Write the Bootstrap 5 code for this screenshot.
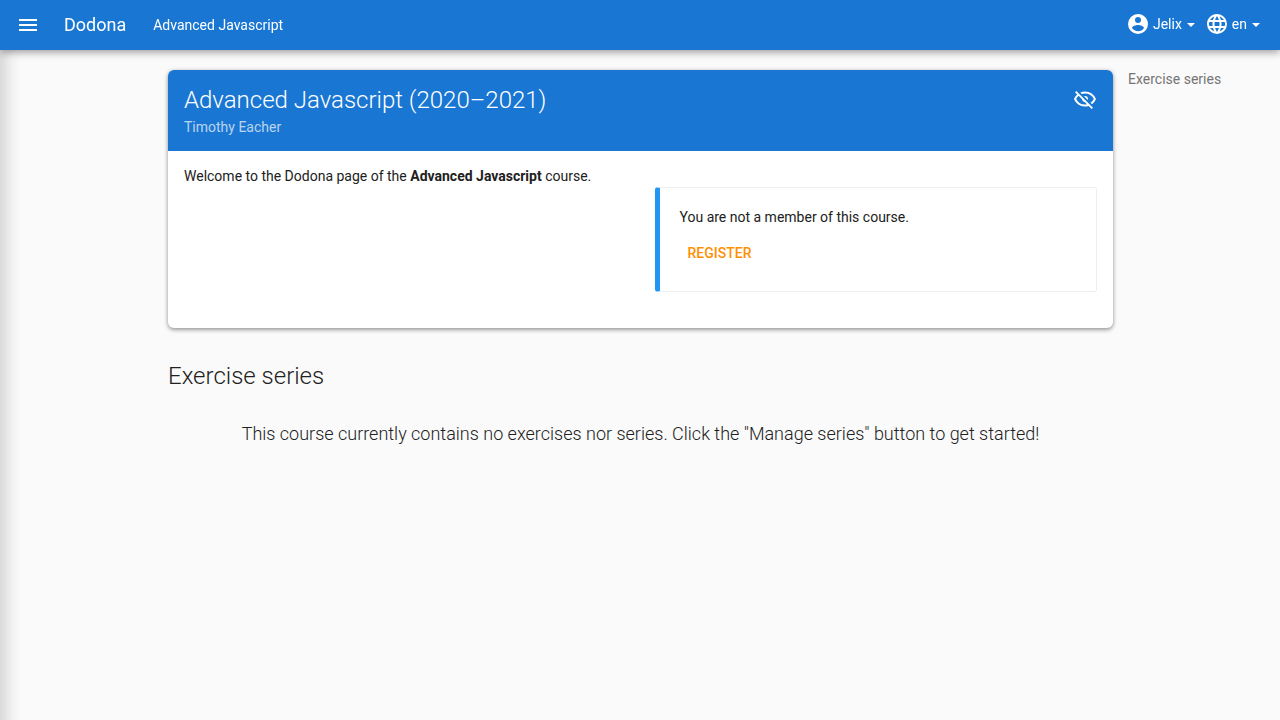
<!DOCTYPE html>
<html lang="en">
<head>
<meta charset="utf-8">
<meta name="viewport" content="width=device-width, initial-scale=1">
<title>Advanced Javascript - Dodona</title>
<link rel="stylesheet" href="https://cdn.jsdelivr.net/npm/bootstrap@5.3.0/dist/css/bootstrap.min.css">
<style>
  body {
    font-family: Roboto, "Liberation Sans", sans-serif;
    font-size: 14px;
    line-height: 20px;
    color: #212121;
    background: #fafafa;
  }
  svg { fill: currentColor; display: block; }
  .topbar {
    height: 50px;
    background: #1976d2;
    box-shadow: 0 2px 8px rgba(0, 0, 0, .4);
    z-index: 20;
  }
  .topbar a, .topbar button { color: #fff; }
  .topbar .brand { font-size: 18px; }
  .topbar .course-link { margin-left: 27px; }
  .account-links { gap: 10px; padding-bottom: 2px; }
  .account-links a { gap: 3px; }
  .topbar .menu-link::after { margin-left: 5px; border-top-width: 4px; border-left-width: 4px; border-right-width: 4px; vertical-align: 2px; }
  .drawer-edge {
    top: 40px;
    bottom: -20px;
    left: -10px;
    width: 10px;
    box-shadow: 0 0 20px rgba(0, 0, 0, .36);
  }
  .page {
    display: grid;
    grid-template-columns: minmax(0, 1fr) minmax(0, 945px) minmax(0, 1fr);
    column-gap: 15px;
    padding-top: 20px;
    padding-left: 1px;
  }
  .course-card {
    border-radius: 6px;
    box-shadow: 0 2px 4px rgba(0, 0, 0, .35), 0 0 4px rgba(0, 0, 0, .12);
  }
  .course-head { background: #1976d2; height: 81px; padding: 14px 16px; }
  .course-body { padding: 15px 16px 36px; }
  .course-body .row { --bs-gutter-x: 28px; }
  .headline { font-size: 24px; line-height: 32px; font-weight: 300; }
  .teacher { color: rgba(255, 255, 255, .7); line-height: 22px; }
  .visibility-icon { margin-top: 3px; }
  .notice {
    margin-top: 21px;
    padding: 19px 20px 20px;
    border: 1px solid #eee;
    border-left: 5px solid #2196f3;
    border-radius: 3px;
  }
  .register {
    height: 36px;
    padding: 0 8px;
    margin: 8px 0 0;
    font-size: 14px;
    font-weight: 500;
    color: #ff8f00;
  }
  .register:hover { color: #ef6c00; }
  .series-title { margin-top: 32px; }
  .empty-text { font-size: 18px; line-height: 26px; font-weight: 300; margin-top: 29px; }
  .toc { color: #757575; line-height: 18px; }
</style>
</head>
<body>
<nav class="topbar sticky-top d-flex align-items-center px-3" aria-label="Main">
  <button type="button" class="btn p-0 border-0" aria-label="Open menu">
    <svg width="24" height="24" viewBox="0 0 24 24"><path d="M3 6h18v2H3V6m0 5h18v2H3v-2m0 5h18v2H3v-2z"/></svg>
  </button>
  <a href="#" class="brand text-decoration-none ms-4">Dodona</a>
  <a href="#" class="course-link text-decoration-none">Advanced Javascript</a>
  <div class="account-links d-flex align-items-center ms-auto me-1">
    <a href="#" class="d-flex align-items-center text-decoration-none" role="button" data-bs-toggle="dropdown">
      <svg width="24" height="24" viewBox="0 0 24 24"><path d="M12 19.2c-2.5 0-4.71-1.28-6-3.2.03-2 4-3.1 6-3.1s5.97 1.1 6 3.1a7.232 7.232 0 0 1-6 3.2M12 5a3 3 0 0 1 3 3 3 3 0 0 1-3 3 3 3 0 0 1-3-3 3 3 0 0 1 3-3m0-3A10 10 0 0 0 2 12a10 10 0 0 0 10 10 10 10 0 0 0 10-10C22 6.47 17.5 2 12 2z"/></svg>
      <span class="menu-link dropdown-toggle">Jelix</span>
    </a>
    <a href="#" class="d-flex align-items-center text-decoration-none" role="button" data-bs-toggle="dropdown">
      <svg width="24" height="24" viewBox="0 0 24 24"><path d="M16.36 14c.08-.66.14-1.32.14-2 0-.68-.06-1.34-.14-2h3.38c.16.64.26 1.31.26 2s-.1 1.36-.26 2m-5.15 5.56c.6-1.11 1.06-2.31 1.38-3.56h2.95a8.03 8.03 0 0 1-4.33 3.56M14.34 14H9.66c-.1-.66-.16-1.32-.16-2 0-.68.06-1.35.16-2h4.68c.09.65.16 1.32.16 2 0 .68-.07 1.34-.16 2M12 19.96c-.83-1.2-1.5-2.53-1.91-3.96h3.82c-.41 1.43-1.08 2.76-1.91 3.96M8 8H5.08A7.923 7.923 0 0 1 9.4 4.44C8.8 5.55 8.35 6.75 8 8m-2.92 8H8c.35 1.25.8 2.45 1.4 3.56A8.008 8.008 0 0 1 5.08 16m-.82-2C4.1 13.36 4 12.69 4 12s.1-1.36.26-2h3.38c-.08.66-.14 1.32-.14 2 0 .68.06 1.34.14 2M12 4.03c.83 1.2 1.5 2.54 1.91 3.97h-3.82c.41-1.43 1.08-2.77 1.91-3.97M18.92 8h-2.95a15.65 15.65 0 0 0-1.38-3.56c1.84.63 3.37 1.9 4.33 3.56M12 2C6.47 2 2 6.5 2 12a10 10 0 0 0 10 10 10 10 0 0 0 10-10A10 10 0 0 0 12 2z"/></svg>
      <span class="menu-link dropdown-toggle">en</span>
    </a>
  </div>
</nav>
<div class="drawer-edge position-fixed"></div>
<div class="page">
  <div></div>
  <main>
    <section class="course-card bg-white overflow-hidden">
      <header class="course-head text-white d-flex justify-content-between align-items-start">
        <div>
          <h1 class="headline mb-0">Advanced Javascript (2020–2021)</h1>
          <div class="teacher">Timothy Eacher</div>
        </div>
        <svg class="visibility-icon" width="24" height="24" viewBox="0 0 24 24" role="img" aria-label="Hidden course"><path d="M2 5.27 3.28 4 20 20.72 18.73 22l-3.08-3.08c-1.15.38-2.37.58-3.65.58-5 0-9.27-3.11-11-7.5.69-1.76 1.79-3.31 3.19-4.54L2 5.27M12 9a3 3 0 0 1 3 3 3 3 0 0 1-.17 1L11 9.17A3 3 0 0 1 12 9m0-4.5c5 0 9.27 3.11 11 7.5a11.79 11.79 0 0 1-4 5.19l-1.42-1.43A9.862 9.862 0 0 0 20.82 12 9.821 9.821 0 0 0 12 6.5c-1.09 0-2.16.18-3.16.5L7.3 5.47c1.44-.62 3.03-.97 4.7-.97M3.18 12A9.821 9.821 0 0 0 12 17.5c.69 0 1.37-.07 2-.21L11.72 15A3.064 3.064 0 0 1 9 12.28L5.6 8.87c-.99.85-1.82 1.91-2.42 3.13z"/></svg>
      </header>
      <div class="course-body">
        <div class="row">
          <div class="col-md-6"><p class="mb-0">Welcome to the Dodona page of the <b>Advanced Javascript</b> course.</p></div>
          <div class="col-md-6">
            <div class="notice">
              <div>You are not a member of this course.</div>
              <button type="button" class="btn border-0 text-uppercase register">Register</button>
            </div>
          </div>
        </div>
      </div>
    </section>
    <h2 class="headline series-title mb-0">Exercise series</h2>
    <p class="empty-text text-center mb-0">This course currently contains no exercises nor series. Click the "Manage series" button to get started!</p>
  </main>
  <aside><a href="#" class="toc d-block text-decoration-none">Exercise series</a></aside>
</div>
<script src="https://cdn.jsdelivr.net/npm/bootstrap@5.3.0/dist/js/bootstrap.bundle.min.js"></script>
</body>
</html>
